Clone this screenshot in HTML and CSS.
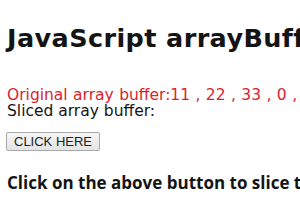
FILE: index.html
```html
<!DOCTYPE html>
<html>
<head>
<meta charset="utf-8">
<link rel="stylesheet" href="styles.css">
</head>
<body>
<h1 class="title">JavaScript arrayBuffer slice() method</h1>
<div class="original">Original array buffer:11 , 22 , 33 , 0 , 0 ,</div>
<div class="sliced">Sliced array buffer:</div>
<button class="btn">CLICK HERE</button>
<h3 class="note">Click on the above button to slice the array buffer</h3>
</body>
</html>
```
FILE: styles.css
```css
html, body {
  margin: 0;
  background: #fff;
  overflow: hidden;
}
body {
  padding: 0 7px;
  font-family: "DejaVu Sans", sans-serif;
  color: #141414;
  white-space: nowrap;
}
.title {
  margin: 0;
  padding-top: 23px;
  font-size: 25.5px;
  line-height: 30px;
  font-weight: 700;
  letter-spacing: 0.4px;
}
.original {
  margin-top: 34px;
  color: #d8232f;
  font-size: 15.5px;
  line-height: 16px;
  word-spacing: 0.5px;
}
.sliced {
  font-size: 15.5px;
  line-height: 16px;
}
.btn {
  display: block;
  box-sizing: border-box;
  margin: 13px 0 0 -1px;
  font-family: "Liberation Sans", Arial, sans-serif;
  font-size: 13px;
  line-height: 15px;
  padding: 1px 7px;
  width: 94px;
  height: 19px;
  background: linear-gradient(#f6f6f6, #e4e4e4);
  border: 1px solid #a9a9a9;
  border-radius: 2px;
  color: #222;
  text-align: center;
}
.note {
  margin: 22px 0 0;
  font-family: "Open Sans", "DejaVu Sans", sans-serif;
  font-size: 17px;
  font-weight: 700;
  line-height: 20px;
}
```
